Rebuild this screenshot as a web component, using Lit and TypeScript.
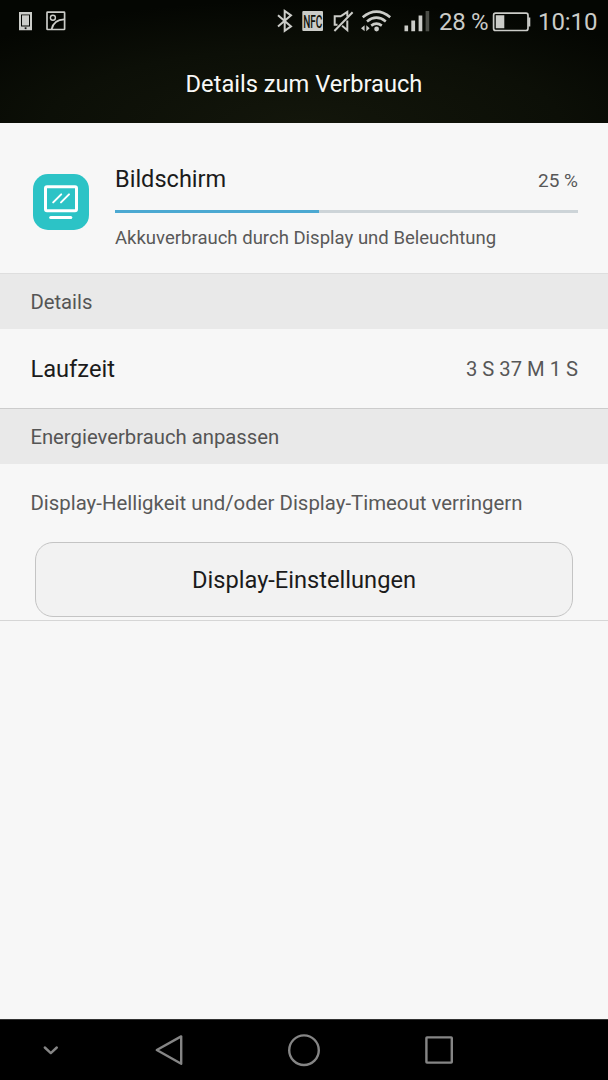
import { LitElement, html, css, svg } from "lit";
import { customElement, property } from "lit/decorators.js";

@customElement("status-bar")
class StatusBar extends LitElement {
  static styles = css`
    :host { display: flex; height: 43px; align-items: flex-start; color: #cbccc8; }
    svg { display: block; flex: none; height: 43px; }
    .space { flex: 1; }
    .text { font-size: 24px; line-height: 28px; padding-top: 8px; white-space: nowrap; }
    .level { width: 52px; margin-left: 9px; letter-spacing: -0.3px; }
    .clock { width: 59px; margin: 0 11px 0 7px; letter-spacing: -0.1px; }
    .nfc { font-size: 18px; font-weight: 500; }
  `;
  render() {
    return html`
      <svg width="80" viewBox="0 0 80 43">
        <path fill="currentColor" fill-rule="evenodd" d="M19 12h13v18.3H19zM21 14.4v12h9v-12z"/>
        <path fill="currentColor" d="M22 15.3h7v10.2h-7z"/>
        <path fill="#111" d="M24.7 27.3h1.8v1.8h-1.8z"/>
        <g fill="none" stroke="currentColor" stroke-width="1.7">
          <rect x="47" y="12.2" width="17.6" height="17.3" rx=".6"/>
          <circle cx="52.9" cy="17.8" r="2.5" stroke-width="1.4"/>
          <path d="M51.6 29.2C52.9 23.4 57.4 19.4 64.2 19.3"/>
        </g>
      </svg>
      <div class="space"></div>
      <svg width="154" viewBox="276 0 154 43">
        <path fill="none" stroke="currentColor" stroke-width="2" d="M278 15.2l13 11.2-6.3 4.4V11l6.3 4.3-13 11.3"/>
        <rect x="302.3" y="11" width="20.7" height="20" rx="1" fill="currentColor"/>
        <text class="nfc" x="303.2" y="27.5" textLength="19.2" lengthAdjust="spacingAndGlyphs" fill="#11140c">NFC</text>
        <g fill="none" stroke="currentColor" stroke-width="2">
          <path d="M341.2 16.2h-6.5v8.6h2.8M341 16.2l6.3-4.3v4.6M347.3 20.5v9.7l-5.2-4.4"/>
          <path d="M352.6 12.3L334.4 31"/>
        </g>
        <g fill="none" stroke="currentColor" stroke-width="2.6">
          <path d="M362.7 17.2q13.8-11.2 27.5 0"/>
          <path d="M367 21.4q9.4-7.6 18.8 0"/>
          <path d="M371.2 25.6q5.2-3.8 10.6 0"/>
        </g>
        <circle cx="376.6" cy="29" r="2.4" fill="currentColor"/>
        <path fill="currentColor" d="M364.6 25.2v6l-3.6-3zM366.3 25.2v6l3.4-3z"/>
        <path fill="currentColor" d="M404.5 25.5h3.6v5.8h-3.6zM411.3 20.6h3.8v10.7h-3.8zM418.6 15.6h3.7v15.7h-3.7z"/>
        <path fill="#4b4d47" d="M425.6 11h3.6v20.3h-3.6z"/>
      </svg>
      <div class="text level">28 %</div>
      <svg width="40" viewBox="491 0 40 43">
        <rect x="493.6" y="13.2" width="34.4" height="17.3" rx="2" fill="none" stroke="currentColor" stroke-width="1.7"/>
        <path fill="currentColor" d="M495.8 15.3h8.5v13h-8.5zM528.3 17.5h2v9h-2z"/>
      </svg>
      <div class="text clock">10:10</div>
    `;
  }
}

@customElement("usage-item")
class UsageItem extends LitElement {
  @property() name = "";
  @property() note = "";
  @property() share = "";
  @property({ type: Number }) fill = 0;
  static styles = css`
    :host { display: flex; height: 150px; padding: 0 30px 0 33px; box-sizing: border-box; }
    .icon { width: 56px; height: 56px; margin: 51px 26px 0 0; flex: none; }
    .body { flex: 1; display: flex; flex-direction: column; padding-top: 41px; }
    .line { display: flex; justify-content: space-between; height: 46px; }
    .name { font-size: 23.55px; line-height: 30px; color: #1b1b1b; }
    .share { font-size: 19px; line-height: 34px; color: #575757; }
    .track { height: 3px; background: #cdd4d8; }
    .bar { height: 3px; background: #4ca9d2; }
    .note { font-size: 18.55px; line-height: 24px; padding-top: 13px; color: #595959; white-space: nowrap; }
  `;
  render() {
    return html`
      <svg class="icon" viewBox="0 0 56 56">
        <rect width="56" height="56" rx="15" fill="#2cc3c6"/>
        <g fill="none" stroke="#fff" stroke-linecap="round">
          <rect x="12.5" y="12.7" width="31" height="24" rx="1.5" stroke-width="3"/>
          <path stroke-width="3" d="M17.7 43.4H37.8"/>
          <path stroke-width="2" d="M20.2 28.4l8-8M28 28.4l8-8"/>
        </g>
      </svg>
      <div class="body">
        <div class="line"><span class="name">${this.name}</span><span class="share">${this.share}</span></div>
        <div class="track"><div class="bar" style="width:${this.fill}%"></div></div>
        <div class="note">${this.note}</div>
      </div>
    `;
  }
}

@customElement("nav-bar")
class NavBar extends LitElement {
  static styles = css`
    :host { display: block; height: 61px; background: #000; box-sizing: border-box; border-top: 1px solid #333; }
    svg { display: block; }
  `;
  render() {
    return html`
      <svg width="608" height="60" viewBox="0 1020 608 60" fill="none" stroke="#858585" stroke-width="2.4" stroke-linejoin="round" stroke-linecap="round">
        ${svg`
          <path d="M44.8 1047.5l6 5.6 6-5.6"/>
          <path d="M181.2 1036.4v27.4L156.8 1050z"/>
          <circle cx="304" cy="1050.2" r="14.8"/>
          <rect x="426.4" y="1037.4" width="25.4" height="25.2" rx=".6"/>
        `}
      </svg>
    `;
  }
}

@customElement("app-root")
class AppRoot extends LitElement {
  static styles = css`
    :host { display: flex; flex-direction: column; height: 1080px; width: 608px; background: #f7f7f7;
      font-family: Roboto, sans-serif; overflow: hidden; }
    .head { height: 123px; background: radial-gradient(ellipse 70% 100% at 50% 100%, #13160b, #0c0f07 60%, #040602); }
    .title { text-align: center; font-size: 23.65px; line-height: 30px; padding-top: 26px; color: #f8f8f6; }
    .section { height: 56px; box-sizing: border-box; border-top: 1px solid #dedede; background: #e9e9e9;
      padding: 0 30.4px; font-size: 20.3px; line-height: 56px; color: #555; }
    .section.strong { border-top-color: #ccc; }
    .row { height: 79px; display: flex; justify-content: space-between; padding: 0 30px 0 30.4px; line-height: 81px; }
    .label { font-size: 23.7px; color: #1b1b1b; }
    .value { font-size: 20.2px; color: #575757; }
    .adjust { height: 156px; border-bottom: 1px solid #d6d6d6; display: flex; flex-direction: column; }
    .hint { height: 78px; padding-left: 30.4px; font-size: 20.4px; line-height: 78px; color: #595959; white-space: nowrap; }
    .button { height: 75px; margin: 0 35px; box-sizing: border-box; border: 1px solid #c4c4c4; border-radius: 18px;
      background: #f2f2f2; padding: 0; font: 23.65px Roboto, sans-serif; color: #1b1b1b; }
    .rest { flex: 1; }
  `;
  render() {
    return html`
      <div class="head">
        <status-bar></status-bar>
        <div class="title">Details zum Verbrauch</div>
      </div>
      <usage-item name="Bildschirm" share="25 %" fill="44" note="Akkuverbrauch durch Display und Beleuchtung"></usage-item>
      <div class="section">Details</div>
      <div class="row"><span class="label">Laufzeit</span><span class="value">3 S 37 M 1 S</span></div>
      <div class="section strong">Energieverbrauch anpassen</div>
      <div class="adjust">
        <div class="hint">Display-Helligkeit und/oder Display-Timeout verringern</div>
        <button class="button">Display-Einstellungen</button>
      </div>
      <div class="rest"></div>
      <nav-bar></nav-bar>
    `;
  }
}
